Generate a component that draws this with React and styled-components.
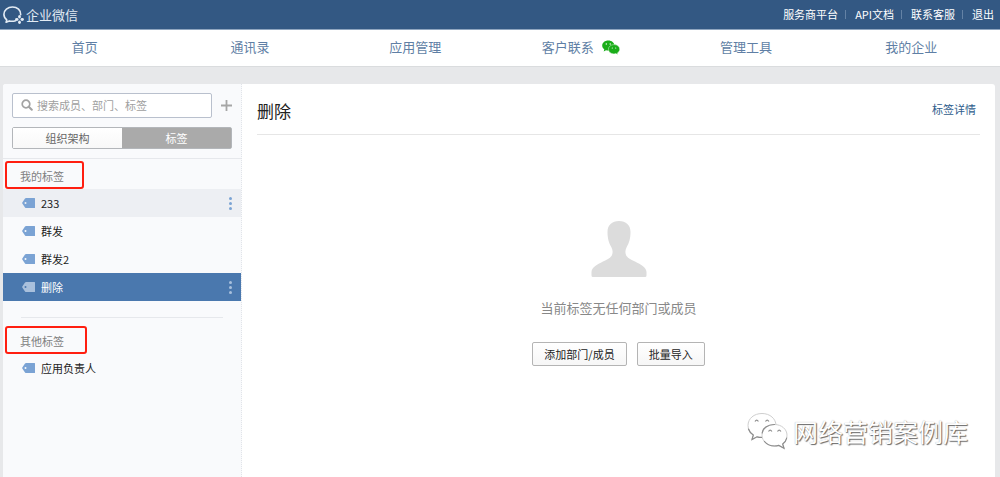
import { useState } from "react";
import styled, { createGlobalStyle, css } from "styled-components";

const topLinks = ["服务商平台", "API文档", "联系客服", "退出"];
const menus = ["首页", "通讯录", "应用管理", "客户联系", "管理工具", "我的企业"];
const myTags = [
  { name: "233", menu: true },
  { name: "群发" },
  { name: "群发2" },
  { name: "删除", menu: true },
];

const LogoIcon = () => (
  <svg width="22" height="18" viewBox="0 0 22 18" fill="none" stroke="#e3ebf4">
    <path
      d="M17.700 8.800C18 4.200 14.300 1 9.500 1 4.700 1 .9 4.200.9 8.300c0 2.300 1.100 4.200 2.900 5.500l-.7 2.400 3.200-1.300c2 .6 4.200.5 6.200-.2"
      strokeWidth="1.600"
      strokeLinecap="round"
      strokeLinejoin="round"
    />
    <g fill="#e3ebf4" stroke="none">
      <ellipse cx="16.500" cy="10.800" rx="1.400" ry="1.700" />
      <ellipse cx="19.200" cy="13.500" rx="1.700" ry="1.400" />
      <ellipse cx="16.500" cy="16.200" rx="1.400" ry="1.700" />
      <ellipse cx="13.800" cy="13.500" rx="1.700" ry="1.400" />
    </g>
  </svg>
);

const WechatIcon = () => (
  <svg width="18" height="15" viewBox="0 0 18 15">
    <path
      fill="#1aad19"
      d="M6.300.5C2.900.5.200 2.700.200 5.600c0 1.600.8 2.900 2.100 3.900l-.6 2 2.300-1.200c.8.200 1.500.300 2.300.300 3.400 0 6.100-2.200 6.100-5S9.700.5 6.300.5z"
    />
    <path
      fill="#1aad19"
      stroke="#fff"
      strokeWidth=".4"
      d="M12 4.600c-3.100 0-5.600 2-5.600 4.600s2.500 4.700 5.600 4.700c.6 0 1.200-.1 1.800-.300l2.100 1-.5-1.700c1.400-.9 2.300-2.100 2.300-3.700 0-2.600-2.600-4.600-5.700-4.600z"
    />
    <g fill="#fff">
      <circle cx="4.300" cy="4" r=".7" />
      <circle cx="8.200" cy="4" r=".7" />
      <circle cx="10.300" cy="8" r=".6" />
      <circle cx="13.700" cy="8" r=".6" />
    </g>
  </svg>
);

const SearchIcon = () => (
  <svg width="12" height="12" viewBox="0 0 12 12" fill="none" stroke="#a3a3a3">
    <circle cx="5" cy="5" r="3.800" strokeWidth="1.700" />
    <path d="M7.800 7.800l3 3" strokeWidth="2" strokeLinecap="round" />
  </svg>
);

const PlusIcon = () => (
  <svg width="11" height="11" viewBox="0 0 11 11" stroke="#a6a6a6">
    <path d="M5.500 0v11M0 5.500h11" strokeWidth="1.800" />
  </svg>
);

const TagIcon = () => (
  <svg width="13" height="10" viewBox="0 0 13 10" fill="currentColor">
    <path
      fillRule="evenodd"
      d="M4 0h8.500a.5.5 0 0 1 .5.5v9a.5.5 0 0 1-.5.5H4Q3.500 10 3 9.500L.300 5.600Q0 5 .300 4.400L3 .5Q3.500 0 4 0zM3.500 4a1 1 0 1 0 0 2 1 1 0 0 0 0-2z"
    />
  </svg>
);

const DotsIcon = () => (
  <svg width="3" height="13" viewBox="0 0 3 13" fill="currentColor">
    <circle cx="1.500" cy="1.500" r="1.500" />
    <circle cx="1.500" cy="6.500" r="1.500" />
    <circle cx="1.500" cy="11.500" r="1.500" />
  </svg>
);

const PersonIcon = () => (
  <svg width="56" height="56" viewBox="0 0 56 56" fill="#dcdcdc">
    <path d="M28 0c7 0 11.500 4 11.500 11 0 7-1.500 11-4 15.500-1.500 3-1.500 6 0 8.500 2 2.500 4.500 3.500 8.500 5.500C50 43.600 55.500 46.500 55.500 51v3.500q0 1.500-1.500 1.500H2Q.5 56 .5 54.500V51c0-4.500 5.500-7.400 11.500-10.500 4-2 6.500-3 8.500-5.500 1.500-2.500 1.500-5.500 0-8.500C18 22 16.500 18 16.500 11 16.500 4 21 0 28 0z" />
  </svg>
);

const WatermarkIcon = () => (
  <svg width="42" height="38" viewBox="0 0 42 38" fill="#fff">
    <g stroke="#cfcfcf" strokeWidth="1" strokeLinejoin="round">
      <path d="M15 1.500C7 1.500 1 6.500 1 13.500c0 4 2 7.200 5.300 9.500L5 27.500l5-2.700c1.700.5 3.300.7 5 .7 8 0 14-5.300 14-12s-6-12-14-12z" />
      <path d="M27.500 12.500c-7 0-12.500 4.700-12.500 10.700S20.500 34 27.500 34c1.500 0 3-.200 4.300-.6l5.200 2.800-1.300-4.200c2.700-2 4.300-5 4.300-8.800 0-6-5.500-10.700-12.500-10.700z" />
    </g>
    <g fill="none" stroke="#8c8c8c" strokeWidth="1.200" strokeLinecap="round">
      <path d="M1.500 17c.7 2.400 2.500 4.500 4.800 6L5 27.500l5-2.700c1.500.4 3 .6 4.500.6" />
      <path d="M15.200 21c.3-4.500 5.300-8.500 12.300-8.500" />
      <path d="M17.500 29.500c2.200 2.800 5.700 4.500 10 4.500 1.500 0 3-.200 4.300-.6l5.200 2.800-1.300-4.200c2-1.400 3.500-3.500 4-6" />
    </g>
    <g fill="none" stroke="#909090" strokeWidth="1.200">
      <path d="M8 9.500q1.700-2.800 3.400 0M18.500 9.500q1.700-2.800 3.400 0M21.500 19.500q1.700-2.800 3.400 0M30.500 19.500q1.700-2.800 3.400 0" />
    </g>
  </svg>
);

const TagRow = ({ tag, hovered, active, onSelect }) => {
  return (
    <StTagItem $hovered={hovered} $active={active}>
      <StTagButton onClick={() => onSelect(tag.name)}>
        <TagIcon />
        <span>{tag.name}</span>
      </StTagButton>
      {tag.menu && (
        <StMoreButton aria-label="更多">
          <DotsIcon />
        </StMoreButton>
      )}
    </StTagItem>
  );
};

const App = () => {
  const [selected, setSelected] = useState("删除");
  const [keyword, setKeyword] = useState("");

  return (
    <>
      <GlobalStyle />
      <StPage>
        <StHeader>
          <StLogo href="#">
            <LogoIcon />
            企业微信
          </StLogo>
          <StTopLinks>
            {topLinks.map((link) => (
              <li key={link}>
                <a href="#">{link}</a>
              </li>
            ))}
          </StTopLinks>
        </StHeader>

        <StNav>
          {menus.map((menu) => (
            <a href="#" key={menu}>
              {menu}
              {menu === "客户联系" && <WechatIcon />}
            </a>
          ))}
        </StNav>

        <StPanel>
          <StSidebar>
            <StTools>
              <StSearchRow>
                <StSearch>
                  <SearchIcon />
                  <input
                    type="text"
                    aria-label="搜索"
                    placeholder="搜索成员、部门、标签"
                    value={keyword}
                    onChange={(e) => setKeyword(e.target.value)}
                  />
                </StSearch>
                <StAddButton aria-label="添加">
                  <PlusIcon />
                </StAddButton>
              </StSearchRow>
              <StTabs>
                <StTab>组织架构</StTab>
                <StTab $active>标签</StTab>
              </StTabs>
            </StTools>

            <StGroupTitle>我的标签</StGroupTitle>
            <StTagList>
              {myTags.map((tag) => (
                <TagRow
                  key={tag.name}
                  tag={tag}
                  hovered={tag.name === "233"}
                  active={tag.name === selected}
                  onSelect={setSelected}
                />
              ))}
            </StTagList>
            <StDivider />
            <StGroupTitle $wide>其他标签</StGroupTitle>
            <StTagList>
              <TagRow
                tag={{ name: "应用负责人" }}
                active={selected === "应用负责人"}
                onSelect={setSelected}
              />
            </StTagList>
          </StSidebar>

          <StMain>
            <StMainHeader>
              <h1>{selected}</h1>
              <a href="#">标签详情</a>
            </StMainHeader>
            <StEmpty>
              <PersonIcon />
              <p>当前标签无任何部门或成员</p>
              <StActions>
                <StButton>添加部门/成员</StButton>
                <StButton>批量导入</StButton>
              </StActions>
            </StEmpty>
          </StMain>
        </StPanel>

        <StWatermark>
          <WatermarkIcon />
          网络营销案例库
        </StWatermark>
      </StPage>
    </>
  );
};

const GlobalStyle = createGlobalStyle`
  * {
    box-sizing: border-box;
    margin: 0;
    padding: 0;
  }

  body, button, input {
    font-family: "Noto Sans CJK SC", "Noto Sans", sans-serif;
    font-size: 11px;
    line-height: 16px;
  }

  body {
    background: #e7e8ea;
    color: #222;
  }

  a {
    color: inherit;
    text-decoration: none;
  }

  ul {
    list-style: none;
  }

  button {
    border: none;
    background: none;
    color: inherit;
    cursor: pointer;
  }

  svg {
    flex: none;
  }
`;

const StPage = styled.div`
  position: relative;
  display: flex;
  flex-direction: column;
  min-height: 100vh;
`;

const StHeader = styled.header`
  display: flex;
  justify-content: space-between;
  align-items: center;
  height: 30px;
  padding: 0 6px 0 3px;
  background: #335883;
  border-bottom: 1px solid #8fa5bf;
  line-height: 14px;
`;

const StLogo = styled.a`
  display: flex;
  align-items: center;
  gap: 1px;
  color: #e3ebf4;
  font-size: 13px;
`;

const StTopLinks = styled.ul`
  display: flex;
  padding-bottom: 2px;
  color: #fff;

  li + li::before {
    content: "";
    display: inline-block;
    height: 9px;
    margin: 0 9px 0 7px;
    border-left: 1px solid #6482a5;
  }
`;

const StNav = styled.nav`
  display: grid;
  grid-template-columns: repeat(6, 1fr);
  height: 37px;
  padding: 0 6px 2px 2px;
  background: #fff;
  border-bottom: 1px solid #dadcde;
  color: #5f7fa5;
  font-size: 13px;

  a {
    display: flex;
    justify-content: center;
    align-items: center;
    gap: 8px;
  }
`;

const StPanel = styled.div`
  display: flex;
  flex: 1;
  margin: 17px 5px 0 3px;
  background: #fff;
  border-radius: 3px 3px 0 0;
  overflow: hidden;
`;

const StSidebar = styled.aside`
  flex: none;
  width: 239px;
  background: #f9fafc;
  border-right: 1px dotted #e1e4e9;
`;

const StTools = styled.div`
  padding: 9px;
  border-bottom: 1px solid #e6e8ec;
`;

const StSearchRow = styled.div`
  display: flex;
  align-items: center;
  gap: 9px;
  margin-bottom: 9px;
`;

const StSearch = styled.label`
  display: flex;
  flex: 1;
  align-items: center;
  gap: 4px;
  height: 25px;
  padding: 0 8px 1px;
  background: #fff;
  border: 1px solid #b9c0cd;
  border-radius: 2px;

  input {
    width: 100%;
    border: none;
    outline: none;
    background: none;
  }

  input::placeholder {
    color: #a0a0a0;
  }
`;

const StAddButton = styled.button`
  display: flex;
`;

const StTabs = styled.div`
  display: flex;
  height: 22px;
  border: 1px solid #b3b6ba;
  border-radius: 2px;
`;

const StTab = styled.button`
  flex: 1;
  background: ${({ $active }) =>
    $active ? "#aaa" : "linear-gradient(#fff, #f8f8f8)"};
  color: ${({ $active }) => ($active ? "#fff" : "#666")};
`;

/* group name inside a red marker frame */
const StGroupTitle = styled.h2`
  width: ${({ $wide }) => ($wide ? "82px" : "79px")};
  height: 28px;
  margin: 2px 0 0 2px;
  padding: 5px 0 0 13px;
  border: 2px solid #ff1e10;
  border-radius: 3px;
  color: #808080;
  font-size: 11px;
  font-weight: 400;
`;

const StTagList = styled.ul`
  display: flex;
  flex-direction: column;
`;

const StTagItem = styled.li`
  display: flex;
  justify-content: space-between;
  height: 28px;
  padding: 0 9px 0 19px;
  color: #7ba3d4;

  span {
    color: #222;
  }

  ${({ $hovered }) =>
    $hovered &&
    css`
      background: #edeff3;
    `}

  ${({ $active }) =>
    $active &&
    css`
      background: #4a78ae;
      color: #a9c0dc;

      span {
        color: #fff;
      }
    `}
`;

const StTagButton = styled.button`
  display: flex;
  flex: 1;
  align-items: center;
  gap: 6px;
`;

const StMoreButton = styled.button`
  display: flex;
  align-items: center;
`;

const StDivider = styled.hr`
  margin: 16px 18px 8px;
  border: none;
  border-top: 1px solid #e6e8ec;
`;

const StMain = styled.main`
  flex: 1;
  padding: 0 15px;
`;

const StMainHeader = styled.div`
  display: flex;
  justify-content: space-between;
  align-items: center;
  height: 51px;
  border-bottom: 1px solid #e6e6e6;

  h1 {
    padding-top: 4px;
    font-size: 17px;
    font-weight: 400;
    line-height: 24px;
  }

  a {
    padding-right: 4px;
    color: #2f5d8c;
  }
`;

const StEmpty = styled.div`
  display: flex;
  flex-direction: column;
  align-items: center;
  padding-top: 86px;

  p {
    margin: 21px 0 24px;
    color: #888;
    font-size: 13px;
    line-height: 20px;
  }
`;

const StActions = styled.div`
  display: flex;
  gap: 10px;
`;

const StButton = styled.button`
  height: 24px;
  padding: 0 11px;
  background: linear-gradient(#fff, #f6f6f6);
  border: 1px solid #b4b4b4;
  border-radius: 2px;
`;

/* floats over the lower right corner of the page */
const StWatermark = styled.div`
  position: absolute;
  right: 32px;
  bottom: 27px;
  display: flex;
  align-items: center;
  gap: 4px;
  color: #fff;
  font-size: 25px;
  line-height: 38px;
  text-shadow: 1px 1px 1px #666, 0 0 1px #aaa;
`;

export default App;
